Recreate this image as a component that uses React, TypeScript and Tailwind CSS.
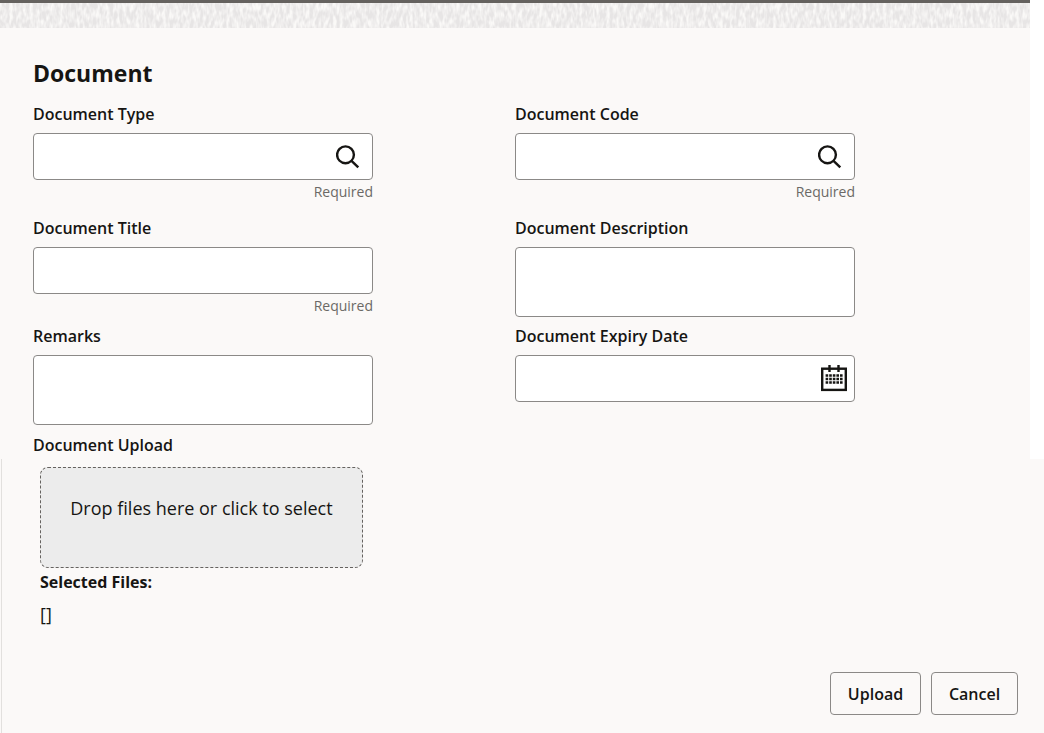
import React, { useId, useState } from 'react';

interface FieldProps {
  label: string;
  required?: boolean;
  multiline?: boolean;
  icon?: React.ReactNode;
  iconLabel?: string;
}

const SearchIcon = () => (
  <svg width="24" height="24" viewBox="0 0 24 24" fill="none" stroke="#161513" strokeWidth="2.4">
    <circle cx="9.5" cy="9.8" r="8.4" />
    <path d="M15.5 15.8l6.8 6.6" />
  </svg>
);

const CalendarIcon = () => (
  <svg width="26" height="27" viewBox="0 0 26 27" fill="none" stroke="#161513">
    <rect x="1.2" y="3.7" width="23.6" height="21.2" strokeWidth="2.4" />
    <path d="M8.5 0v7M17.5 0v7" strokeWidth="2.4" />
    <path d="M4.6 10.4h17M4.6 14h17M4.6 17.6h17" strokeWidth="2.5" strokeDasharray="2.6 1" />
  </svg>
);

const Field = ({ label, required = false, multiline = false, icon, iconLabel }: FieldProps) => {
  const id = useId();

  return (
    <div className="flex flex-col">
      <label htmlFor={id} className="h-8 leading-[26px] font-semibold">
        {label}
      </label>
      {multiline ? (
        <textarea id={id} className="h-[70px] resize-none rounded-sm border border-[#8b8987] bg-white px-3 py-2" />
      ) : (
        <div className="h-[47px] flex items-center rounded-sm border border-[#8b8987] bg-white">
          <input id={id} type="text" className="min-w-0 h-full flex-1 px-3 outline-none" />
          {icon && (
            <button type="button" aria-label={iconLabel} className="h-full flex items-center">
              {icon}
            </button>
          )}
        </div>
      )}
      {required && <div className="h-6 text-right text-sm leading-6 text-[#6b6966]">Required</div>}
    </div>
  );
};

const Texture = () => (
  <svg className="block w-full h-[25px] bg-[#e7e5e5]" aria-hidden="true">
    <filter id="grain" x="0" y="0" width="100%" height="100%" colorInterpolationFilters="sRGB">
      <feTurbulence type="fractalNoise" baseFrequency="0.3 0.12" numOctaves="2" seed="4" />
      <feColorMatrix values="0 0 0 0 0.98  0 0 0 0 0.975  0 0 0 0 0.97  2.6 0 0 0 -0.9" />
    </filter>
    <rect width="100%" height="100%" filter="url(#grain)" />
  </svg>
);

const App = () => {
  const [files, setFiles] = useState<string[]>([]);

  return (
    <div className="relative min-h-screen flex flex-col bg-[#fbf9f8] font-['Open_Sans','Noto_Sans',sans-serif] text-base text-[#161513]">
      <div className="h-[3px] bg-[#65625f]"></div>
      <Texture />
      <div className="absolute right-0 top-0 w-3.5 h-[459px] bg-white"></div>
      <div className="absolute left-px top-[459px] bottom-0 w-px bg-[#e2e0de]"></div>

      <main className="flex-1 flex flex-col pl-[33px] pr-[26px] pt-7 pb-[18px]">
        <h1 className="h-[45px] text-[23px] leading-[34px] font-bold">Document</h1>
        <div className="flex items-start gap-[142px]">
          <div className="w-[340px] flex flex-col">
            <div className="flex flex-col gap-[11px]">
              <Field
                label="Document Type"
                required
                icon={<span className="pr-3"><SearchIcon /></span>}
                iconLabel="Search document type"
              />
              <Field label="Document Title" required />
            </div>
            <div className="mt-[5px] flex flex-col gap-2">
              <Field label="Remarks" multiline />
              <div>
                <div className="leading-6 font-semibold">Document Upload</div>
                <div className="px-[7px] pt-[10px]">
                  <label className="h-[101px] mr-[3px] flex justify-center rounded-lg border border-dashed border-[#65625f] bg-[#ececec] pt-6 text-lg leading-8 cursor-pointer">
                    Drop files here or click to select
                    <input
                      type="file"
                      multiple
                      className="sr-only"
                      onChange={e => setFiles(Array.from(e.target.files ?? []).map(file => file.name))}
                    />
                  </label>
                  <h2 className="leading-7 font-bold">Selected Files:</h2>
                  <div className="pt-1 text-lg leading-7">[{files.join(', ')}]</div>
                </div>
              </div>
            </div>
          </div>
          <div className="w-[340px] flex flex-col">
            <div className="flex flex-col gap-[11px]">
              <Field
                label="Document Code"
                required
                icon={<span className="pr-3"><SearchIcon /></span>}
                iconLabel="Search document code"
              />
              <Field label="Document Description" multiline />
            </div>
            <div className="mt-[6px]">
              <Field
                label="Document Expiry Date"
                icon={<span className="pr-[7px]"><CalendarIcon /></span>}
                iconLabel="Choose date"
              />
            </div>
          </div>
        </div>
        <div className="mt-auto flex justify-end gap-[10px]">
          <button type="button" className="h-[43px] w-[91px] rounded-sm border border-[#8b8987] font-semibold">
            Upload
          </button>
          <button type="button" className="h-[43px] w-[87px] rounded-sm border border-[#8b8987] font-semibold">
            Cancel
          </button>
        </div>
      </main>
    </div>
  );
};

export default App;
